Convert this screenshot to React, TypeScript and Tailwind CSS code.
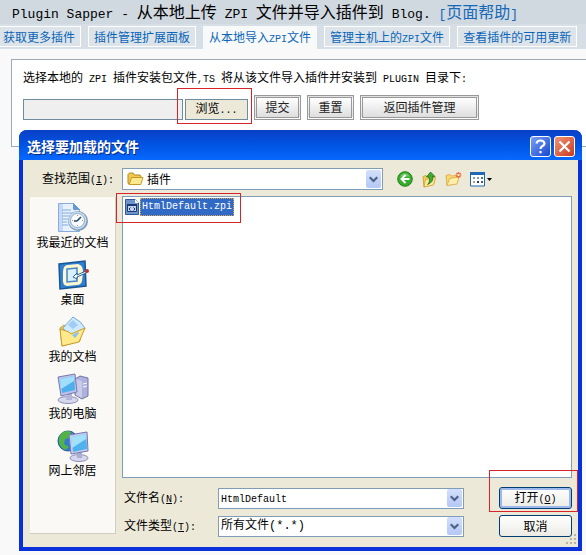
import type { ReactNode } from 'react'

const LATIN = "font-['Liberation_Mono','Noto_Sans_CJK_SC',monospace]"

// Half-width characters are set smaller so that two of them fill one ideograph
function Mixed({ text, size = 'text-[10px]' }: { text: string; size?: string }) {
  return (
    <>
      {text.split(/([\x20-\x7e]+)/).map((part, i) =>
        i % 2 ? (
          <span key={i} className={`${LATIN} ${size} whitespace-pre`}>
            {part}
          </span>
        ) : (
          part
        ),
      )}
    </>
  )
}

function Key({ letter, colon = true }: { letter: string; colon?: boolean }) {
  return (
    <span className={`${LATIN} text-[10px]`}>
      (<u>{letter}</u>){colon && ':'}
    </span>
  )
}

function Chevron() {
  return (
    <span className="pointer-events-none flex h-[18px] w-[15px] shrink-0 items-center justify-center rounded-xs bg-linear-to-b from-[#d3dffc] to-[#b4c8f4]">
      <svg width="9" height="7" viewBox="0 0 9 7" fill="none" stroke="#4d6185" strokeWidth="2.2">
        <path d="M0.7 1.2 4.5 5 8.3 1.2" />
      </svg>
    </span>
  )
}

function FormButton({ children, className = '' }: { children: ReactNode; className?: string }) {
  return (
    <button
      type="button"
      className={`h-[25px] border-3 border-double border-[#999] bg-linear-to-b from-white to-[#dedede] pb-0.5 text-[#222] ${className}`}
    >
      {children}
    </button>
  )
}

function FolderIcon() {
  return (
    <svg width="17" height="16" viewBox="0 0 17 16" className="shrink-0">
      <path d="M1 3.5 2.5 2H6l1.5 2H13l1 1.5V12L2 13.5 1 12Z" fill="#f1c94f" stroke="#b58a1c" />
      <path d="M4.5 6.5H16L13.8 13.5H2.2Z" fill="#ffe98f" stroke="#c49a2a" />
    </svg>
  )
}

function FileIcon() {
  return (
    <svg width="16" height="16" viewBox="0 0 16 16" className="shrink-0">
      <path d="M1.5.5h10l3 3v12h-13Z" fill="#6f93cc" stroke="#33599a" />
      <path d="M11 0v4h4Z" fill="#fff" />
      <path d="M3.5 5.5h9v7h-9Z" fill="#c3d4ee" stroke="#1c3970" />
      <path d="M3 5h10v2H3Z" fill="#1c3970" />
      <path d="M6.5 8.5 5 10l1.5 1.500M9.500 8.500 11 10l-1.500 1.500" stroke="#1c3970" fill="none" />
    </svg>
  )
}

function BackIcon() {
  return (
    <svg width="16" height="16" viewBox="0 0 16 16">
      <circle cx="8" cy="8" r="7.3" fill="#37ab2c" stroke="#23821c" />
      <path d="M3 5.500Q8-1 13 5.500Z" fill="#74cc68" />
      <path d="M12.5 8H5M8.5 4l-4 4 4 4" fill="none" stroke="#fff" strokeWidth="2" />
    </svg>
  )
}

function UpIcon() {
  return (
    <svg width="16" height="17" viewBox="0 0 16 17">
      <path d="M2 5.5 5 4.500l1.500 1.500L12 5l1 8-10 3Z" fill="#f3cf5a" stroke="#d0a437" />
      <path d="m4.500 8.500 10-2-2 7.500-9.500 2Z" fill="#ffeb9c" stroke="#d5ad3d" />
      <path d="M6.500 13.500Q9.500 11 8 6H5.500L9.500 1l4.500 4.500h-2.500Q13 11 6.500 13.500Z" fill="#43a832" stroke="#1f7419" strokeWidth="0.8" />
    </svg>
  )
}

function NewFolderIcon() {
  return (
    <svg width="17" height="16" viewBox="0 0 17 16">
      <path d="M1 4.5 5 3.5 6.5 5 12 4.500V12L2 14.500Z" fill="#f8d871" stroke="#dfb052" />
      <path d="M4.5 7.5 14 6l-2 7-10 1.500Z" fill="#ffefaa" stroke="#e0b456" />
      <path d="M13.500 1v6M10.500 4h6M11.500 2l4 4M15.500 2l-4 4" stroke="#ee5e36" strokeWidth="1.200" />
      <circle cx="13.5" cy="4" r="1.2" fill="#fff2c0" />
    </svg>
  )
}

function ViewIcon() {
  return (
    <svg width="22" height="15" viewBox="0 0 22 15">
      <path d="M.5 1h14v13H.5Z" fill="#fff" stroke="#2168b4" />
      <path d="M0 0h15v3H0Z" fill="#2168b4" />
      <path d="M3 5h2v2H3ZM7 5h2v2H7Z" fill="#8796b5" />
      <path d="M11 5h2v2h-2Z" fill="#3c8c52" />
      <path d="M3 9h2v2H3Z" fill="#d29478" />
      <path d="M7 9h2v2H7Z" fill="#17407f" />
      <path d="M11 9h2v2h-2Z" fill="#4c5978" />
      <path d="M17 6h5l-2.5 3Z" fill="#000" />
    </svg>
  )
}

function RecentIcon() {
  return (
    <svg width="32" height="32" viewBox="0 0 32 32">
      <path d="M1.5 1.5h15l6 6v22h-21Z" fill="#e7f1ff" stroke="#8babdc" />
      <path d="M2 2h4v27H2Z" fill="#c3d9f7" />
      <path d="M16.5 1.5v6h6Z" fill="#5b9ae0" stroke="#6c98ce" />
      <path d="M5 8h9M5 11h13M5 14h8M5 17h6M5 20h5M5 23h6" stroke="#84aada" />
      <circle cx="21" cy="19" r="10" fill="#7e9aba" />
      <circle cx="20.5" cy="18.5" r="9" fill="#c7dcef" />
      <circle cx="20.5" cy="18.5" r="7" fill="#f8fcff" stroke="#8cabc9" />
      <path d="m20 19 4-4M20 19h-3" stroke="#204768" strokeWidth="1.6" />
      <path d="M20.5 13v1M20.5 23v1M15 18.5h1M25 18.5h1" stroke="#e7823d" />
    </svg>
  )
}

function DesktopIcon() {
  return (
    <svg width="32" height="32" viewBox="0 0 32 32">
      <path d="m2 5 26-3 1 25-26 3Z" fill="#2f81cf" stroke="#195596" strokeWidth="1.500" />
      <path d="m10 6 11-1q5 1 5 8l-1 9q-1 4-5 4l-10 1q-5-1-4-8V13q0-6 4-7Z" fill="#fff6cf" />
      <path d="m10 10 10-1v13l-10 1Z" fill="#d7efff" stroke="#4387c5" strokeWidth="1.500" />
      <path d="m16 18 4-4v2l9-4v2l-9 4v2Z" fill="#fff" stroke="#285f9b" />
      <circle cx="30" cy="12" r="2" fill="#bd3636" />
    </svg>
  )
}

function DocumentsIcon() {
  return (
    <svg width="32" height="32" viewBox="0 0 32 32">
      <path d="m3 12 4-3 5 4 11-2v14L5 30Z" fill="#eec85c" stroke="#cda32f" />
      <path d="M16 1q8 4 12 11L17 27 6 12Z" fill="#cfe9ff" stroke="#78a9d7" />
      <path d="m16 4 5 5-5 4-5-4Z" fill="#9fcdf3" />
      <path d="m3 13 9 3 2 2 14-6-6 14-17 4Z" fill="#ffe98a" stroke="#c89d29" />
      <path d="m15 19 6-3 1 1-4 5Z" fill="#86c2f2" />
    </svg>
  )
}

function ComputerIcon() {
  return (
    <svg width="32" height="32" viewBox="0 0 32 32">
      <path d="m18 6 5-3 8 2v18l-6 3-7-4Z" fill="#aeb1dc" stroke="#7376aa" />
      <path d="m19 6 6 2v17l-6-3Z" fill="#c9cbe9" />
      <path d="m26 11 4-1M26 14l4-1" stroke="#fff" />
      <ellipse cx="11" cy="27" rx="10" ry="3.5" fill="#d6d7ec" stroke="#8d8fbc" />
      <path d="M10 20h5v7h-6Z" fill="#b3b5da" />
      <path d="m1 4 17-3 2 18-16 4Z" fill="#bec2e7" stroke="#777bb1" />
      <path d="m3 6 14-3 1 14-13 3Z" fill="#4dafec" />
      <path d="m3 6 14-3v5L4 16Z" fill="#a0defd" />
    </svg>
  )
}

function NetworkIcon() {
  return (
    <svg width="32" height="32" viewBox="0 0 32 32">
      <circle cx="11" cy="11" r="10" fill="#327cd0" stroke="#2158a2" />
      <path d="M3 5q5-6 11-3l-2 6-4 1-1 5 5 3-4 3Q1 16 2 9ZM15 3l5 4-3 5Z" fill="#53b445" />
      <ellipse cx="22" cy="28" rx="9" ry="3.5" fill="#d6d7ec" stroke="#8d8fbc" />
      <path d="M20 22h5v6h-5Z" fill="#aaaecf" />
      <path d="m12 5 18-3 1 19-17 3Z" fill="#cacdec" stroke="#7377ad" />
      <path d="m14 7 15-3 1 15-14 3Z" fill="#50b1ed" />
      <path d="m14 7 15-3v5L15 18Z" fill="#a3e0fc" />
    </svg>
  )
}

const tabs = ['获取更多插件', '插件管理扩展面板', '从本地导入ZPI文件', '管理主机上的ZPI文件', '查看插件的可用更新']

const places = [
  { label: '我最近的文档', icon: <RecentIcon /> },
  { label: '桌面', icon: <DesktopIcon /> },
  { label: '我的文档', icon: <DocumentsIcon /> },
  { label: '我的电脑', icon: <ComputerIcon /> },
  { label: '网上邻居', icon: <NetworkIcon /> },
]

function OpenDialog() {
  return (
    <div
      role="dialog"
      aria-labelledby="dialog-title"
      className="absolute top-[130px] right-1 left-[19px] rounded-t-lg border-x-4 border-b-4 border-[#0831d9] bg-[#ece9d8]"
    >
      <div className="-mx-1 flex h-[30px] items-center gap-[3px] rounded-t-lg bg-linear-to-b from-[#0a3fc5] via-[#0054e3] to-[#0868ff] pt-0.5 pr-[7px] pl-2">
        <h2 id="dialog-title" className="flex-1 text-sm leading-4 font-bold text-white [text-shadow:1px_1px_#0a2a80]">
          选择要加载的文件
        </h2>
        <button
          type="button"
          aria-label="帮助"
          className="flex size-[21px] items-center justify-center rounded-[3px] border border-white bg-linear-to-br from-[#7b9ff5] to-[#1845cc]"
        >
          <svg width="13" height="15" viewBox="0 0 13 15" fill="none" stroke="#fff" strokeWidth="2.2">
            <path d="M2.5 4.5Q3 1.5 6.5 1.5T10.5 4.5Q10.5 6 8.5 7T6.5 10M6.5 12v2.2" />
          </svg>
        </button>
        <button
          type="button"
          aria-label="关闭"
          className="flex size-[21px] items-center justify-center rounded-[3px] border border-white bg-linear-to-br from-[#ef9478] to-[#cb3514]"
        >
          <svg width="13" height="13" viewBox="0 0 13 13" stroke="#fff" strokeWidth="2.2">
            <path d="m1.5 1.5 10 10M11.5 1.5l-10 10" />
          </svg>
        </button>
      </div>

      {/* Look-in row */}
      <div className="flex items-center pt-2">
        <label htmlFor="look-in" className="w-[99px] shrink-0 pl-[19px]">
          查找范围
          <Key letter="I" />
        </label>
        <div className="flex h-[22px] max-w-[261px] flex-1 items-center border border-[#7f9db9] bg-white pr-px pl-1">
          <FolderIcon />
          <select id="look-in" className="-mr-[15px] ml-[3px] h-full flex-1 appearance-none">
            <option>插件</option>
          </select>
          <Chevron />
        </div>
        <div className="ml-[14px] flex items-center gap-2">
          <button type="button" aria-label="后退"><BackIcon /></button>
          <button type="button" aria-label="向上"><UpIcon /></button>
          <button type="button" aria-label="新建文件夹"><NewFolderIcon /></button>
          <button type="button" aria-label="查看"><ViewIcon /></button>
        </div>
      </div>

      <div className="flex gap-[6px] pt-[6px] pr-[6px] pl-[7px]">
        <nav className="mt-px mb-[13px] flex w-[86px] shrink-0 flex-col gap-[9px] border-r border-b border-[#d0cdbf] bg-[#faf9f5] pt-[5px]">
          {places.map((place) => (
            <button key={place.label} type="button" className="flex flex-col items-center">
              {place.icon}
              {place.label}
            </button>
          ))}
        </nav>

        <div className="flex-1">
          <div className="h-[282px] border border-[#7f9db9] bg-white p-px">
            <div className="relative flex w-fit items-center">
              <FileIcon />
              <span className={`${LATIN} bg-[#316ac5] px-0.5 text-[10px] leading-[18px] text-white outline outline-dotted -outline-offset-1 outline-[#d6a45c]`}>
                HtmlDefault.zpi
              </span>
              <div className="pointer-events-none absolute -top-[5px] -right-[7px] -bottom-[7px] -left-[8px] border border-[#d8232a]" />
            </div>
          </div>

          <form className="flex flex-col gap-[6px] pt-[9px] pb-[10px]">
            <div className="flex items-center">
              <label htmlFor="file-name" className="w-24 shrink-0 pl-0.5">
                文件名
                <Key letter="N" />
              </label>
              <div className="flex h-[21px] max-w-[246px] flex-1 items-center border border-[#7f9db9] bg-white pr-px">
                <input
                  id="file-name"
                  defaultValue="HtmlDefault"
                  className={`${LATIN} h-full w-0 flex-1 px-0.5 pt-0.5 text-[10px] outline-none`}
                />
                <button type="button" aria-label="历史文件名"><Chevron /></button>
              </div>
              <div className="relative ml-auto">
                <button
                  type="button"
                  className="h-[22px] w-[73px] rounded-[3px] border border-[#003c74] bg-linear-to-b from-white to-[#ecebe5] inset-ring-2 inset-ring-[#9db9eb]"
                >
                  打开
                  <Key letter="O" colon={false} />
                </button>
                <div className="pointer-events-none absolute -top-[17px] -right-[6px] -bottom-[3px] -left-[10px] border border-[#d8232a]" />
              </div>
            </div>
            <div className="flex items-center">
              <label htmlFor="file-type" className="w-24 shrink-0 pl-0.5">
                文件类型
                <Key letter="T" />
              </label>
              <div className="flex h-[21px] max-w-[246px] flex-1 items-center border border-[#7f9db9] bg-white pr-px">
                <select id="file-type" className="-mr-[15px] h-full flex-1 appearance-none px-0.5 font-['Liberation_Mono','Noto_Sans_CJK_SC',monospace]">
                  <option>所有文件(*.*)</option>
                </select>
                <Chevron />
              </div>
              <button
                type="button"
                className="ml-auto h-[22px] w-[73px] rounded-[3px] border border-[#003c74] bg-linear-to-b from-white to-[#ecebe5]"
              >
                取消
              </button>
            </div>
          </form>
        </div>
      </div>

      <svg width="12" height="12" viewBox="0 0 12 12" fill="#b8b4a3" className="absolute right-px bottom-px">
        <path d="M9 0h2v2H9ZM5 4h2v2H5ZM9 4h2v2H9ZM1 8h2v2H1ZM5 8h2v2H5ZM9 8h2v2H9Z" />
      </svg>
    </div>
  )
}

export default function App() {
  return (
    <div className="relative min-h-screen overflow-hidden bg-[#f9f9f9] font-['Noto_Sans_CJK_SC',sans-serif] text-xs leading-4 text-black">
      <h1 className="h-6 bg-[#d0d9e0] pl-3 text-base leading-[22px] whitespace-nowrap">
        <Mixed text="Plugin Sapper - 从本地上传 ZPI 文件并导入插件到 Blog. " size="text-[13px]" />
        <a href="#help" className="text-[#1668b8]">
          <Mixed text="[页面帮助]" size="text-[13px]" />
        </a>
      </h1>

      <nav className="flex h-[25px] gap-[7px] bg-[#d6dfe5] pt-0.5 whitespace-nowrap">
        {tabs.map((tab, i) => (
          <a
            key={tab}
            href={`#tab-${i}`}
            className={`border px-[5px] leading-[19px] text-[#0b65b8] first:-ml-[3px] ${
              i === 2 ? 'border-[#f8f9f9] bg-[#f8f9f9]' : 'h-[21px] border-white bg-[#dce4e9]'
            }`}
          >
            <Mixed text={tab} />
          </a>
        ))}
      </nav>

      <form className="mt-[10px] ml-[11px] h-[88px] border-y border-l border-[#9aaab9] bg-white pt-[9px] pl-[11px]">
        <label htmlFor="package" className="block h-4">
          <Mixed text="选择本地的 ZPI 插件安装包文件,TS 将从该文件导入插件并安装到 PLUGIN 目录下:" />
        </label>
        <div className="mt-[10px] flex items-start">
          <input id="package" type="text" readOnly className="mt-1 h-[21px] w-40 border border-[#6e8ba0] bg-[#efefef]" />
          <div className="relative mt-1 ml-0.5">
            <button type="button" className="block h-[21px] w-[63px] border border-[#6e8ba0] bg-[#ece9d8]">
              <Mixed text="浏览..." />
            </button>
            <div className="pointer-events-none absolute -top-[11px] -right-[4px] -bottom-[4px] -left-[8px] border border-[#d8232a]" />
          </div>
          <FormButton className="ml-[6px] w-[47px]">提交</FormButton>
          <FormButton className="ml-[6px] w-[47px]">重置</FormButton>
          <FormButton className="ml-[6px] w-[119px]">返回插件管理</FormButton>
        </div>
      </form>

      <OpenDialog />
    </div>
  )
}
